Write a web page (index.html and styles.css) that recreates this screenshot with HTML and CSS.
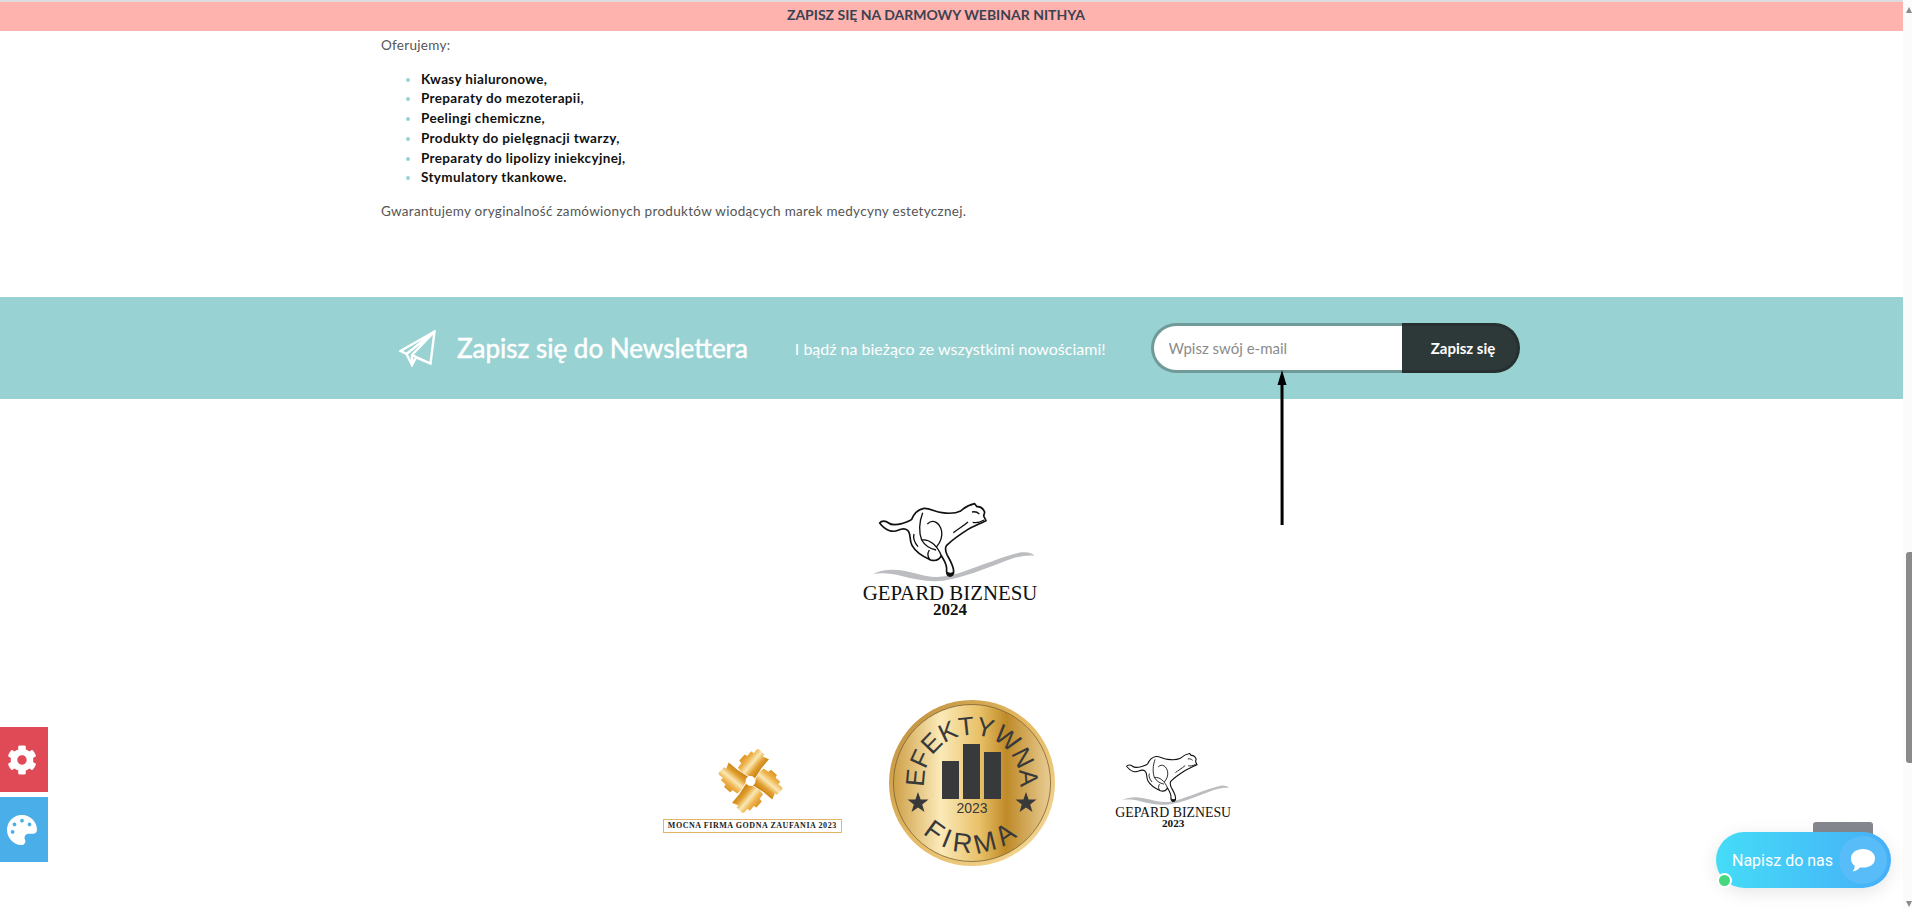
FILE: index.html
```html
<!DOCTYPE html>
<html lang="pl">
<head>
  <meta charset="UTF-8" />
  <meta name="viewport" content="width=device-width, initial-scale=1.0" />
  <title>Newsletter</title>
  <link rel="stylesheet" href="styles.css">
</head>
<body>
  <svg class="defs" width="0" height="0">
    <symbol id="cheetah" viewBox="0 0 660 420">
      <path class="wave" d="M100 252C135 232 185 238 225 250C275 265 310 265 365 247C430 225 500 195 545 187C565 185 578 190 583 197C560 194 530 200 490 215C430 238 370 262 310 272C265 277 225 268 185 258C155 250 125 248 100 252Z"/>
      <path class="cat" d="M119 99C124 92 136 91 146 99C154 106 170 105 188 100C200 96 210 93 215 88C222 70 236 58 252 55C270 54 286 66 306 68C326 71 346 71 362 63C374 52 386 44 404 41L411 50C420 49 429 55 434 66L431 78L438 92L425 98C412 105 398 109 384 118C362 132 338 148 320 166C314 174 316 184 322 196C331 212 341 228 341 245C341 255 335 259 328 258C320 256 319 246 320 236C320 222 312 210 304 197C298 209 286 214 272 210C254 202 228 188 216 166C207 150 214 132 203 121C195 114 186 115 174 121C158 128 136 122 119 99Z"/>
      <path class="cat-line" d="M248 68C238 95 236 125 245 150C254 166 270 176 288 180M262 102C280 84 300 100 305 124C308 144 300 158 290 170M245 150C268 146 292 166 304 197M222 132C218 146 224 158 234 170M396 66C404 64 412 66 418 72M398 97C408 99 420 97 432 90M270 210C262 200 262 190 268 180M340 128C352 118 368 110 384 96"/>
      <path class="foot" d="M320 244C326 250 336 250 341 243C342 254 336 259 328 258C323 257 320 251 320 244Z"/>
    </symbol>
    <symbol id="star" viewBox="-11 -11 22 22">
      <polygon points="0,-11 2.6,-3.6 10.5,-3.4 4.2,1.4 6.5,8.9 0,4.4 -6.5,8.9 -4.2,1.4 -10.5,-3.4 -2.6,-3.6"/>
    </symbol>
  </svg>

  <div class="page">
    <div class="main">
      <div class="promo">ZAPISZ SIĘ NA DARMOWY WEBINAR NITHYA</div>

      <div class="content">
        <p>Oferujemy:</p>
        <ul>
          <li>Kwasy hialuronowe,</li>
          <li>Preparaty do mezoterapii,</li>
          <li>Peelingi chemiczne,</li>
          <li>Produkty do pielęgnacji twarzy,</li>
          <li>Preparaty do lipolizy iniekcyjnej,</li>
          <li>Stymulatory tkankowe.</li>
        </ul>
        <p>Gwarantujemy oryginalność zamówionych produktów wiodących marek medycyny estetycznej.</p>
      </div>

      <div class="newsletter">
        <svg class="plane" viewBox="0 0 37 37">
          <path d="M35.5 1.5L1.5 21L7.5 24L13 35L17 27.5L31.5 33.5ZM35.5 1.5L7.5 24M35.5 1.5L13 25L13 35M13 25L31.5 33.5"/>
        </svg>
        <h2>Zapisz się do Newslettera</h2>
        <span class="news-sub">I bądź na bieżąco ze wszystkimi nowościami!</span>
        <form class="news-form">
          <input type="text" placeholder="Wpisz swój e-mail">
          <button type="button">Zapisz się</button>
        </form>
      </div>

      <div class="gepard-main">
        <svg class="gepard-big" viewBox="0 0 660 420">
          <use href="#cheetah" width="660" height="420"/>
          <text class="gepard-name" x="330" y="330" textLength="524" lengthAdjust="spacingAndGlyphs">GEPARD BIZNESU</text>
          <text class="gepard-year" x="330" y="375">2024</text>
        </svg>
      </div>

      <div class="awards">
        <div class="trust">
          <svg class="hands" viewBox="205 50 206 200">
            <defs>
              <linearGradient id="gold-arm" gradientUnits="userSpaceOnUse" x1="212" y1="168" x2="262" y2="108">
                <stop offset="0" stop-color="#d68a18"/>
                <stop offset="0.3" stop-color="#eeb24a"/>
                <stop offset="0.52" stop-color="#fae8b4"/>
                <stop offset="0.75" stop-color="#e29f2e"/>
                <stop offset="1" stop-color="#c47c12"/>
              </linearGradient>
            </defs>
            <g id="arm">
              <path class="arm" d="M205 125L222 108L228 113L236 94L262 116L296 138L276 176L262 188L248 178L240 184L222 168L226 160L212 148L218 140L207 132Z"/>
            </g>
            <use href="#arm" transform="rotate(90 302 150)"/>
            <use href="#arm" transform="rotate(180 302 150)"/>
            <use href="#arm" transform="rotate(270 302 150)"/>
            <circle cx="302" cy="150" r="15" fill="#fff"/>
          </svg>
          <div class="trust-box">MOCNA FIRMA GODNA ZAUFANIA 2023</div>
        </div>

        <svg class="medal" viewBox="0 0 166 166">
          <defs>
            <linearGradient id="gold-rim" x1="0" y1="0" x2="1" y2="1">
              <stop offset="0" stop-color="#b98a3a"/>
              <stop offset="0.45" stop-color="#e3b75f"/>
              <stop offset="1" stop-color="#f6dc9c"/>
            </linearGradient>
            <linearGradient id="gold-face" x1="0" y1="0" x2="1" y2="0">
              <stop offset="0" stop-color="#cfa048"/>
              <stop offset="0.3" stop-color="#fbeab8"/>
              <stop offset="0.55" stop-color="#e8c067"/>
              <stop offset="0.72" stop-color="#bf8a28"/>
              <stop offset="1" stop-color="#e9cd95"/>
            </linearGradient>
            <path id="arc-top" d="M37.1 97A48 48 0 1 1 128.900 97"/>
            <path id="arc-bottom" d="M13 83A70 70 0 0 0 153 83"/>
          </defs>
          <circle cx="83" cy="83" r="83" fill="url(#gold-rim)"/>
          <circle cx="83" cy="83" r="78.5" fill="url(#gold-face)" stroke="#7a6234" stroke-width="0.8"/>
          <text class="medal-text"><textPath href="#arc-top" startOffset="50%">EFEKTYWNA</textPath></text>
          <text class="medal-text medal-text-low"><textPath href="#arc-bottom" startOffset="50%">FIRMA</textPath></text>
          <rect class="bar" x="53" y="61" width="17" height="38"/>
          <rect class="bar" x="74" y="44" width="17" height="55"/>
          <rect class="bar" x="95" y="52" width="17" height="47"/>
          <text class="medal-year" x="83" y="113">2023</text>
          <use class="medal-star" href="#star" x="18" y="92" width="22" height="22"/>
          <use class="medal-star" href="#star" x="126" y="92" width="22" height="22"/>
        </svg>

        <svg class="gepard-small" viewBox="58 30 544 362">
          <use href="#cheetah" width="660" height="420"/>
          <text class="gepard-name" x="330" y="330" textLength="524" lengthAdjust="spacingAndGlyphs">GEPARD BIZNESU</text>
          <text class="gepard-year" x="330" y="375">2023</text>
        </svg>
      </div>
    </div>

    <div class="scrollbar">
      <span class="arrow-up"></span>
      <span class="thumb"></span>
      <span class="arrow-down"></span>
    </div>
  </div>

  <!-- annotation drawn over the page -->
  <svg class="pointer" viewBox="0 0 12 156">
    <path d="M6 0L10.5 15H7.5L7.6 155H4.6L4.5 15H1.5Z"/>
  </svg>

  <div class="side-tools">
    <a class="side-btn red">
      <svg viewBox="0 0 512 512"><path d="M487.4 315.7l-42.6-24.6c4.3-23.2 4.3-47 0-70.2l42.6-24.6c4.9-2.8 7.1-8.6 5.5-14-11.1-35.6-30-67.8-54.7-94.6-3.8-4.1-10-5.1-14.8-2.3L380.8 110c-17.9-15.4-38.5-27.3-60.8-35.1V25.8c0-5.6-3.9-10.5-9.4-11.7-36.7-8.2-74.3-7.8-109.2 0-5.5 1.2-9.4 6.1-9.4 11.7V75c-22.2 7.9-42.8 19.8-60.8 35.1L88.7 85.5c-4.9-2.8-11-1.9-14.8 2.3-24.7 26.7-43.6 58.9-54.7 94.6-1.7 5.4.6 11.2 5.5 14L67.3 221c-4.3 23.2-4.3 47 0 70.2l-42.6 24.6c-4.9 2.8-7.1 8.6-5.5 14 11.1 35.6 30 67.8 54.7 94.6 3.8 4.1 10 5.1 14.8 2.3l42.6-24.6c17.9 15.4 38.5 27.3 60.8 35.1v49.2c0 5.6 3.9 10.5 9.4 11.7 36.7 8.2 74.3 7.8 109.2 0 5.5-1.2 9.4-6.1 9.4-11.7v-49.2c22.2-7.9 42.8-19.8 60.8-35.1l42.6 24.6c4.9 2.8 11 1.9 14.8-2.3 24.7-26.7 43.6-58.9 54.7-94.6 1.5-5.5-.7-11.3-5.6-14.1zM256 336c-44.1 0-80-35.9-80-80s35.9-80 80-80 80 35.9 80 80-35.9 80-80 80z"/></svg>
    </a>
    <a class="side-btn blue">
      <svg viewBox="0 0 512 512"><path d="M204.3 5C104.9 24.4 24.8 104.3 5.2 203.4c-37 187 131.7 326.4 258.8 306.7 41.2-6.4 61.4-54.6 42.5-91.7-23.1-45.4 9.9-98.4 60.9-98.4h79.7c35.8 0 64.8-29.6 64.9-65.3C511.5 97.1 368.1-26.9 204.3 5zM96 320c-17.7 0-32-14.3-32-32s14.3-32 32-32 32 14.3 32 32-14.3 32-32 32zm32-128c-17.7 0-32-14.3-32-32s14.3-32 32-32 32 14.3 32 32-14.3 32-32 32zm128-64c-17.7 0-32-14.3-32-32s14.3-32 32-32 32 14.3 32 32-14.3 32-32 32zm128 64c-17.7 0-32-14.3-32-32s14.3-32 32-32 32 14.3 32 32-14.3 32-32 32z"/></svg>
    </a>
  </div>

  <div class="to-top"></div>

  <div class="chat">
    <span class="chat-label">Napisz do nas</span>
    <span class="chat-icon">
      <svg viewBox="0 0 24 23"><path d="M12 0C18.6 0 24 3.6 24 9.4C24 15.2 18.6 18.6 12 18.6C11 18.6 10 18.5 9.1 18.4C7 20.6 4.500 22 1.500 22.500C3 21 3.800 19 3.700 16.800C1.300 15.200 0 12.600 0 9.400C0 3.600 5.400 0 12 0Z"/></svg>
    </span>
    <span class="chat-dot"></span>
  </div>
</body>
</html>
```

FILE: styles.css
```css
body {
  margin: 0;
  height: 909px;
  overflow: hidden;
  background-color: #fff;
  font-family: 'Lato', 'Open Sans', sans-serif;
  color: #555;
}

.defs {
  display: block;
  height: 0;
}

.page {
  display: flex;
  height: 909px;
}

.main {
  flex: 1;
  min-width: 0;
}

.promo {
  border-top: 2px solid #dcdcdc;
  height: 29px;
  line-height: 26px;
  padding-right: 31px;
  text-align: center;
  background-color: #ffb3ae;
  color: #3c4252;
  font-size: 14px;
  font-weight: 700;
}

.content {
  padding: 5px 0 0 381px;
  font-size: 13.5px;
  line-height: 19.7px;
  letter-spacing: 0.3px;
  font-weight: 400;
}

.content p {
  margin: 0;
}

.content ul {
  margin: 14px 0;
  padding-left: 40px;
  color: #111;
  font-weight: 700;
  letter-spacing: 0.35px;
}

.content li::marker {
  color: #99d2d2;
}

.newsletter {
  display: flex;
  align-items: center;
  height: 102px;
  margin-top: 75.4px;
  padding-left: 399px;
  background-color: #99d2d2;
  color: #fff;
}

.plane {
  width: 37px;
  height: 37px;
  margin-right: 21px;
}

.plane path {
  fill: none;
  stroke: #fff;
  stroke-width: 2.4;
  stroke-linejoin: miter;
}

.newsletter h2 {
  margin: 0 47px 0 0;
  font-size: 26px;
  font-weight: 400;
  -webkit-text-stroke: 0.5px #fff;
}

.news-sub {
  font-size: 16px;
  font-weight: 400;
}

.news-form {
  display: flex;
  margin-left: 45px;
  height: 50px;
}

.news-form input {
  box-sizing: border-box;
  width: 251px;
  height: 50px;
  padding: 0 0 0 15px;
  border: 3px solid #6f9a98;
  border-right: none;
  border-radius: 25px 0 0 25px;
  background-color: #fff;
  font-family: inherit;
  font-size: 15px;
  outline: none;
}

.news-form input::placeholder {
  color: #8b8b8b;
}

.news-form button {
  box-sizing: border-box;
  width: 118px;
  height: 50px;
  padding: 0 0 0 8px;
  border: 3px solid #273030;
  border-left: none;
  border-radius: 0 25px 25px 0;
  background-color: #2d3939;
  color: #fff;
  font-family: inherit;
  font-size: 15px;
  font-weight: 700;
}

.gepard-main {
  display: flex;
  justify-content: center;
  margin-top: 91px;
  padding-right: 3px;
}

.gepard-big {
  width: 220px;
  height: 140px;
}

.wave {
  fill: #bcbdc0;
}

.cat {
  fill: #fff;
  stroke: #111;
  stroke-width: 5;
  stroke-linejoin: round;
}

.cat-line {
  fill: none;
  stroke: #111;
  stroke-width: 4;
}

.foot {
  fill: #111;
}

.gepard-name,
.gepard-year {
  font-family: 'Liberation Serif', serif;
  text-anchor: middle;
  fill: #111;
}

.gepard-name {
  font-size: 64px;
}

.gepard-year {
  font-size: 51px;
  font-weight: 700;
}

.awards {
  display: flex;
  justify-content: center;
  align-items: center;
  gap: 47px;
  margin-top: 70px;
  padding-right: 7px;
}

.trust {
  display: flex;
  flex-direction: column;
  align-items: center;
  gap: 5px;
  margin-top: 14px;
}

.hands {
  width: 69px;
  height: 66px;
}

.arm {
  fill: url(#gold-arm);
}

.trust-box {
  box-sizing: border-box;
  width: 179px;
  height: 14px;
  line-height: 11px;
  border: 1.5px solid #e2b565;
  text-align: center;
  font-family: 'Liberation Serif', serif;
  font-size: 8px;
  font-weight: 700;
  letter-spacing: 0.55px;
  white-space: nowrap;
  color: #222;
}

.medal {
  width: 166px;
  height: 166px;
}

.medal-text {
  font-family: 'Liberation Sans', sans-serif;
  font-size: 26px;
  letter-spacing: -0.4px;
  text-anchor: middle;
  fill: #38393b;
}

.medal-text-low {
  font-size: 27px;
  letter-spacing: 5px;
}

.bar {
  fill: #38393b;
}

.medal-year {
  font-family: 'Liberation Sans', sans-serif;
  font-size: 14px;
  text-anchor: middle;
  fill: #38393b;
}

.medal-star {
  fill: #38393b;
}

.gepard-small {
  width: 120.4px;
  height: 80px;
  margin-left: 11px;
  margin-top: 15px;
}

.scrollbar {
  display: flex;
  flex-direction: column;
  flex: none;
  box-sizing: border-box;
  width: 9px;
  padding: 7px 0 2px 3px;
  background-color: #fbfbfb;
}

.arrow-up,
.arrow-down {
  width: 0;
  height: 0;
  border-left: 3px solid transparent;
  border-right: 3px solid transparent;
}

.arrow-up {
  border-bottom: 6px solid #8a8a8a;
}

.arrow-down {
  border-top: 6px solid #8a8a8a;
  margin-top: auto;
}

.thumb {
  height: 211px;
  margin-top: 539px;
  border-radius: 3px 0 0 3px;
  background-color: #8a8a8a;
}

.pointer {
  position: absolute;
  left: 1276px;
  top: 370px;
  width: 12px;
  height: 156px;
}

.side-tools {
  position: absolute;
  left: 0;
  top: 727px;
  display: flex;
  flex-direction: column;
  gap: 5px;
}

.side-btn {
  display: flex;
  align-items: center;
  justify-content: center;
  width: 48px;
  height: 65px;
}

.side-btn svg {
  width: 30px;
  height: 30px;
  margin-right: 4px;
  fill: #fff;
}

.red {
  background-color: #e04a57;
}

.blue {
  background-color: #4aaee8;
}

.to-top {
  position: absolute;
  left: 1813px;
  top: 822px;
  width: 60px;
  height: 40px;
  border-radius: 3px;
  background-color: #85898f;
}

.chat {
  position: absolute;
  left: 1716px;
  top: 832px;
  box-sizing: border-box;
  display: flex;
  align-items: center;
  width: 175px;
  height: 56px;
  padding-left: 16px;
  border-radius: 28px;
  background: linear-gradient(90deg, #45dcf7, #45aff8);
  box-shadow: 0 4px 18px rgba(0, 0, 0, 0.1);
  color: #fff;
}

.chat-label {
  font-family: 'Roboto', sans-serif;
  font-size: 16px;
}

.chat-icon {
  position: absolute;
  right: 4px;
  top: 4px;
  display: flex;
  align-items: center;
  justify-content: center;
  width: 48px;
  height: 48px;
  border-radius: 50%;
  background-color: #58bcf8;
}

.chat-icon svg {
  width: 24px;
  height: 23px;
  fill: #fff;
}

.chat-dot {
  position: absolute;
  left: 1px;
  top: 41px;
  box-sizing: border-box;
  width: 15px;
  height: 15px;
  border: 2px solid #fff;
  border-radius: 50%;
  background-color: #45d87e;
}
```
